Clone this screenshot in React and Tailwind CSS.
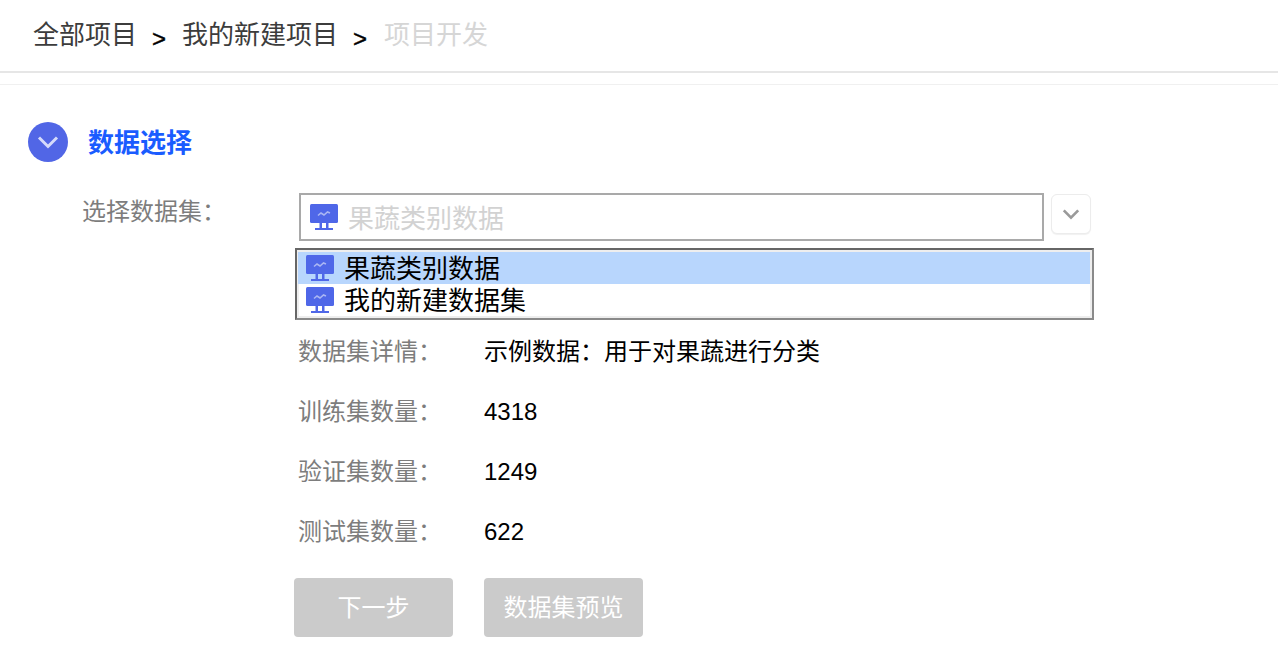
const cjk = "font-['Liberation_Sans','Noto_Sans_CJK_SC',sans-serif]";

function DataIcon({ className }) {
  return (
    <svg viewBox="0 0 28 28" className={className}>
      <rect x="0" y="1" width="28" height="19" rx="1.5" fill="#4f67e8" />
      <path d="M8 12.5 L11 10 L14 12 L17.5 9 L20 10" fill="none" stroke="#aab6f3" strokeWidth="1.6" />
      <rect x="9.5" y="20" width="2.5" height="5" fill="#4f67e8" />
      <rect x="16" y="20" width="2.5" height="5" fill="#4f67e8" />
      <rect x="5" y="25" width="18" height="2" fill="#4f67e8" />
    </svg>
  );
}

function Sep() {
  return <span className="ml-[15px] mr-[16px] mt-[4px] text-[24px] [-webkit-text-stroke:0.4px_black]">&gt;</span>;
}

const details = [
  ['数据集详情', '示例数据：用于对果蔬进行分类'],
  ['训练集数量', '4318'],
  ['验证集数量', '1249'],
  ['测试集数量', '622'],
];

export default function App() {
  return (
    <div className={`${cjk} h-[662px] overflow-hidden bg-white text-black`}>
      <header className="flex h-[73px] items-start border-b-2 border-[#e6e6e6] pl-[33px] pt-[17px] text-[26px] leading-[36px]">
        <span className="text-[#3c3c3c]">全部项目</span>
        <Sep />
        <span className="text-[#3c3c3c]">我的新建项目</span>
        <Sep />
        <span className="ml-[1px] text-[#d6d6d6]">项目开发</span>
      </header>
      <div className="mt-[11px] h-[1px] bg-[#f0f0f0]" />

      <section className="flex items-center pl-[28px] pt-[37px]">
        <span className="flex h-[40px] w-[40px] items-center justify-center rounded-full bg-[#5166e6]">
          <svg viewBox="0 0 24 16" className="h-[16px] w-[24px]">
            <path d="M3 3.5 L12 12.5 L21 3.5" fill="none" stroke="#d5dbfa" strokeWidth="3" />
          </svg>
        </span>
        <h2 className="ml-[20px] h-[40px] text-[26px] font-bold leading-[42px] text-[#1a5cff]">数据选择</h2>
      </section>

      <div className="mt-[31px] flex pl-[82px]">
        <div className="mt-[2px] w-[213px] text-[24px] leading-[34px] text-[#7d7d7d]">选择数据集：</div>
        <div>
          <div className="ml-[4px] flex items-center">
            <div className="flex h-[48px] w-[745px] items-center border-2 border-[#a9a9a9] pl-[9px]">
              <DataIcon className="h-[28px] w-[28px]" />
              <span className="ml-[10px] pt-[4px] text-[26px] text-[#d2d2d2]">果蔬类别数据</span>
            </div>
            <button className="ml-[7px] flex h-[40px] w-[40px] -translate-y-[3px] items-center justify-center rounded-md border border-[#ececec] bg-white shadow-[0_1px_1px_rgba(0,0,0,0.06)]">
              <svg viewBox="0 0 20 12" className="h-[12px] w-[18px]">
                <path d="M2 2 L10 10 L18 2" fill="none" stroke="#9a9a9a" strokeWidth="3" />
              </svg>
            </button>
          </div>

          <div className="mt-[7px] h-[72px] w-[799px] border-2 border-[#8a8a8a] border-l-[#666] border-t-[#666] bg-white pb-[2px] pl-[1px] pr-[2px] pt-[2px] shadow-[inset_0_0_0_2px_#eeeeee]">
            <div className="flex h-[32px] items-center bg-[#b8d6fd] pl-[8px] text-[26px]">
              <DataIcon className="h-[28px] w-[28px]" />
              <span className="ml-[10px] pt-[2px] leading-[30px]">果蔬类别数据</span>
            </div>
            <div className="flex h-[32px] items-center pl-[8px] text-[26px]">
              <DataIcon className="h-[28px] w-[28px]" />
              <span className="ml-[10px] pt-[2px] leading-[30px]">我的新建数据集</span>
            </div>
          </div>

          <div className="ml-[3px] mt-[2px] flex flex-col">
            {details.map(([label, value]) => (
              <div key={label} className="flex h-[60px] items-center text-[24px]">
                <span className="w-[186px] text-[#7d7d7d]">{label}：</span>
                <span>{value}</span>
              </div>
            ))}
          </div>

          <div className="ml-[-1px] mt-[16px] flex gap-[31px]">
            <button className="h-[59px] w-[159px] rounded bg-[#cbcbcb] text-[24px] text-white">下一步</button>
            <button className="h-[59px] w-[159px] rounded bg-[#cbcbcb] text-[24px] text-white">数据集预览</button>
          </div>
        </div>
      </div>
    </div>
  );
}
